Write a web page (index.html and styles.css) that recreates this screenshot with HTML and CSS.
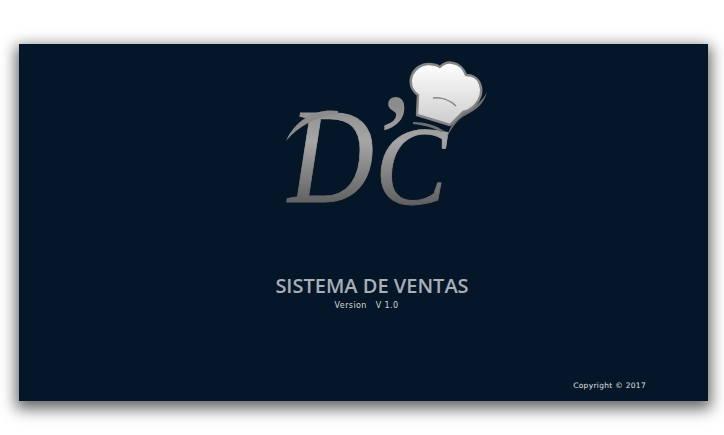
FILE: index.html
```html
<!DOCTYPE html>
<html lang="en">
<head>
    <meta charset="UTF-8">
    <meta name="viewport" content="width=device-width, initial-scale=1.0">
    <title>Sistema de Ventas</title>
    <link rel="stylesheet" href="styles.css">
</head>
<body>
    <div class="splash">
        <svg class="logo" viewBox="280 56 220 156" width="220" height="156">
            <defs>
                <linearGradient id="letterFill" gradientUnits="userSpaceOnUse" x1="0" y1="105" x2="0" y2="208">
                    <stop offset="0" stop-color="#8c8c8c"/>
                    <stop offset="0.35" stop-color="#a6a6a6"/>
                    <stop offset="1" stop-color="#5c5c5c"/>
                </linearGradient>
                <linearGradient id="hatFill" x1="0" y1="0" x2="0" y2="1">
                    <stop offset="0" stop-color="#ffffff"/>
                    <stop offset="1" stop-color="#cccccc"/>
                </linearGradient>
            </defs>
            <g class="logo-letters" fill="url(#letterFill)">
                <text x="288" y="202" font-size="136" textLength="86" lengthAdjust="spacingAndGlyphs" stroke="url(#letterFill)" stroke-width="0.8">D</text>
                <text x="375" y="204" font-size="112" textLength="72" lengthAdjust="spacingAndGlyphs" stroke="url(#letterFill)" stroke-width="0.8">C</text>
                <text x="365" y="183" font-size="130">’</text>
            </g>
            <!-- swash on the D -->
            <path d="M338 111C318 108 296 118 286 141C298 126 316 117 338 114Z" fill="#8c8c8c"/>
            <!-- chef hat -->
            <path d="M487 92C484 104 476 110 466 115C456 120 451 130 447 137C450 126 456 117 464 112C474 107 482 102 487 92Z" fill="#6f6f6f"/>
            <path d="M413 122C424 122 436 125 444 131L441 132C432 127 423 125 413 124Z" fill="#6f6f6f"/>
            <path d="M418 95C411 90 409 82 412 75C415 68 422 64 428 64C433 64 437 65 440 67C444 63 449 62 453 63C459 64 464 69 466 75C472 75 478 78 480 84C483 92 480 100 475 105C471 109 467 111 463 112C459 116 454 121 450 125L417 115Z" fill="url(#hatFill)" stroke="#858585" stroke-width="2.4" stroke-linejoin="round"/>
            <path d="M433 98C441 97 450 100 456 106" fill="none" stroke="#858585" stroke-width="1.5"/>
        </svg>
        <h1 class="title">SISTEMA DE VENTAS</h1>
        <p class="version">Version&nbsp;&nbsp;&nbsp;V 1.0</p>
        <p class="copyright">Copyright © 2017</p>
    </div>
</body>
</html>
```

FILE: styles.css
```css
html, body {
    height: 100%;
}

body {
    margin: 0;
    padding: 44px 16px 34px 19px;
    box-sizing: border-box;
    background-color: #ffffff;
    overflow: hidden;
}

.splash {
    display: flex;
    flex-direction: column;
    align-items: center;
    height: 357px;
    padding-top: 12px;
    box-sizing: border-box;
    background-color: #051628;
    box-shadow: 0 5px 14px 3px rgba(0, 0, 0, 0.6);
}

.logo {
    display: block;
    margin-left: 53px;
}

.logo-letters {
    font-family: "Liberation Serif", serif;
    font-style: italic;
}

.title {
    margin: 61px 0 0 17px;
    font-family: "Open Sans", sans-serif;
    font-size: 20px;
    font-weight: 600;
    line-height: 26px;
    color: #a9afb6;
}

.version {
    margin: 1px 0 0 6px;
    font-family: "DejaVu Sans", sans-serif;
    font-size: 8px;
    line-height: 12px;
    letter-spacing: 0.4px;
    color: #d4d6d9;
}

.copyright {
    align-self: flex-end;
    margin: auto 62px 9px 0;
    font-family: "DejaVu Sans", sans-serif;
    font-size: 7.5px;
    line-height: 12px;
    letter-spacing: 0.3px;
    color: #e0e2e4;
}
```
